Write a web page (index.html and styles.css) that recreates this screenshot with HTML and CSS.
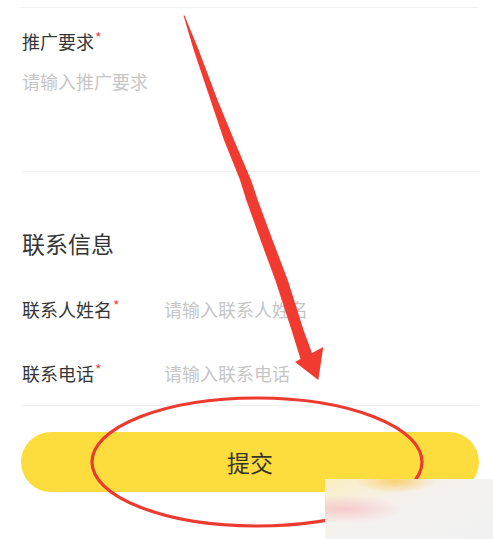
FILE: index.html
```html
<!DOCTYPE html>
<html lang="zh-CN">
<head>
<meta charset="utf-8">
<title>联系信息</title>
<link rel="stylesheet" href="styles.css">
</head>
<body>
<div class="page">
  <div class="form">
    <div class="divider top"></div>
    <div class="field-block">
      <div class="label">推广要求<span class="req">*</span></div>
      <div class="placeholder area">请输入推广要求</div>
    </div>
    <div class="divider"></div>
    <div class="section-title">联系信息</div>
    <div class="row">
      <div class="label row-label">联系人姓名<span class="req">*</span></div>
      <div class="placeholder">请输入联系人姓名</div>
    </div>
    <div class="row">
      <div class="label row-label">联系电话<span class="req">*</span></div>
      <div class="placeholder">请输入联系电话</div>
    </div>
    <div class="divider"></div>
    <button class="submit">提交</button>
  </div>

  <svg class="annotation" width="493" height="539" viewBox="0 0 493 539">
    <polygon fill="#f23b30" points="183.5,15.5 193.7,50 210.5,100 224,140 240,180 246.25,200 260.5,240 275.25,280 291.5,330 300.5,359 295,362 318.3,380 323.3,347 312,353 303.5,330 287.75,280 272.5,240 257.75,200 251,180 234,140 217.5,100 198.7,50 184.5,15.5"/>
    <ellipse cx="257" cy="462" rx="165" ry="64" fill="none" stroke="#ec3a2f" stroke-width="3.2"/>
  </svg>
  <div class="watermark"></div>
</div>
</body>
</html>
```

FILE: styles.css
```css
html, body {
  margin: 0;
  padding: 0;
  background: #ffffff;
}

.page {
  position: relative;
  width: 493px;
  height: 539px;
  overflow: hidden;
  font-family: "Noto Sans CJK SC", "Noto Sans", sans-serif;
}

.form {
  margin: 0 14px 0 21px;
  display: flex;
  flex-direction: column;
}

.divider {
  height: 1px;
  background: #f1f1f1;
}

.divider.top {
  margin-top: 7px;
}

.field-block {
  height: 163px;
  box-sizing: border-box;
  padding-top: 21px;
  padding-left: 1px;
}

.label {
  font-size: 18px;
  line-height: 24px;
  color: #353535;
  white-space: nowrap;
}

.req {
  color: #e8473d;
  font-size: 14px;
  vertical-align: top;
  line-height: 16px;
  margin-left: 1px;
}

.placeholder {
  font-size: 18px;
  line-height: 24px;
  color: #c6c6c6;
  white-space: nowrap;
}

.placeholder.area {
  margin-top: 16px;
}

.section-title {
  font-size: 23px;
  line-height: 30px;
  color: #353535;
  padding-top: 56px;
  margin-bottom: 19px;
  padding-left: 1px;
}

.row {
  height: 64px;
  display: flex;
  align-items: center;
  padding-left: 1px;
}

.row-label {
  width: 142px;
}

.submit {
  margin-top: 26px;
  height: 60px;
  border: none;
  border-radius: 30px;
  background: #fddd3e;
  color: #35342a;
  font-family: "Noto Sans CJK SC", "Noto Sans", sans-serif;
  font-size: 23px;
  padding: 0;
}

.annotation {
  position: absolute;
  left: 0;
  top: 0;
  pointer-events: none;
}

.watermark {
  position: absolute;
  left: 325px;
  top: 479px;
  width: 168px;
  height: 60px;
  background:
    radial-gradient(ellipse 40px 12px at 70px 2px, rgba(250, 200, 90, 0.8), rgba(250, 200, 90, 0) 100%),
    radial-gradient(ellipse 60px 14px at 18px 30px, rgba(245, 190, 195, 0.75), rgba(245, 190, 195, 0) 100%),
    linear-gradient(160deg, #fbeec0 0%, #f6f0ea 35%, #f3f2f1 60%, #f1f1f1 100%);
}
```
